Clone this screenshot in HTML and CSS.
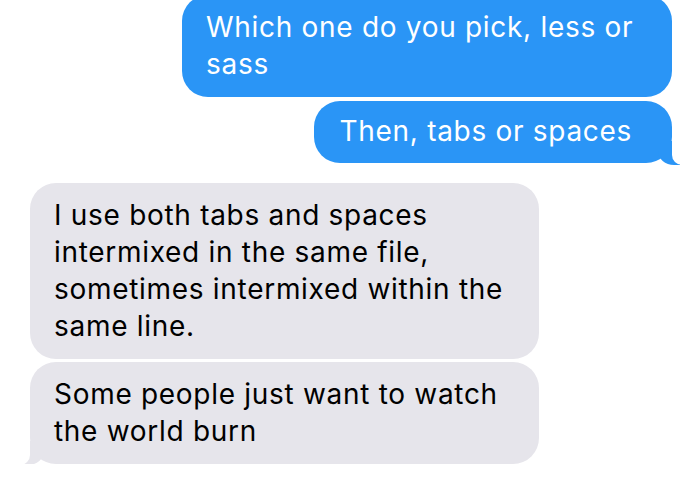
FILE: index.html
```html
<!DOCTYPE html>
<html lang="en">
<head>
    <meta charset="UTF-8">
    <meta name="viewport" content="width=device-width, initial-scale=1.0">
    <title>Messages</title>
    <link rel="stylesheet" href="styles.css">
</head>
<body>

<div class="thread">
    <!-- Sent messages -->
    <div class="group sent-group">
        <div class="bubble sent first">Which one do you pick, less or sass</div>
        <div class="bubble sent tail">Then, tabs or spaces</div>
    </div>

    <!-- Received messages -->
    <div class="group received-group">
        <div class="bubble received">I use both tabs and spaces intermixed in the same file, sometimes intermixed within the same line.</div>
        <div class="bubble received tail">Some people just want to watch the world burn</div>
    </div>
</div>

</body>
</html>
```

FILE: styles.css
```css
body {
    margin: 0;
    background-color: #fff;
    font-family: Inter, "Noto Sans", sans-serif;
    overflow: hidden;
}

.thread {
    display: flex;
    flex-direction: column;
    gap: 20px;
    margin-top: -5px;
}

.group {
    display: flex;
    flex-direction: column;
    gap: 4px;
}

.sent-group {
    align-items: flex-end;
    padding-right: 28px;
}

.received-group {
    align-items: flex-start;
    padding-left: 30px;
    gap: 3px;
}

.bubble {
    position: relative;
    box-sizing: border-box;
    font-size: 28px;
    line-height: 37px;
    letter-spacing: 0.7px;
    padding: 14px 30px 14px 24px;
    border-radius: 26px;
}

.sent {
    background-color: #2a95f6;
    color: #fff;
    max-width: 490px;
}

.sent.tail {
    padding-top: 12px;
    padding-bottom: 13px;
    padding-left: 26px;
    padding-right: 40px;
}

.received {
    background-color: #e6e5eb;
    color: #000;
    width: 509px;
    padding-right: 22px;
}

/* bubble tails */
.sent.tail::before {
    content: "";
    position: absolute;
    right: -8px;
    bottom: -2px;
    width: 22px;
    height: 24px;
    background-color: #2a95f6;
    border-bottom-left-radius: 16px 14px;
}

.sent.tail::after {
    content: "";
    position: absolute;
    right: -28px;
    bottom: -2px;
    width: 28px;
    height: 24px;
    background-color: #fff;
    border-bottom-left-radius: 10px;
}

.received.tail::before {
    content: "";
    position: absolute;
    left: -10px;
    bottom: -1px;
    width: 24px;
    height: 24px;
    background-color: #e6e5eb;
    border-bottom-right-radius: 16px 14px;
}

.received.tail::after {
    content: "";
    position: absolute;
    left: -30px;
    bottom: -1px;
    width: 30px;
    height: 24px;
    background-color: #fff;
    border-bottom-right-radius: 10px;
}
```
